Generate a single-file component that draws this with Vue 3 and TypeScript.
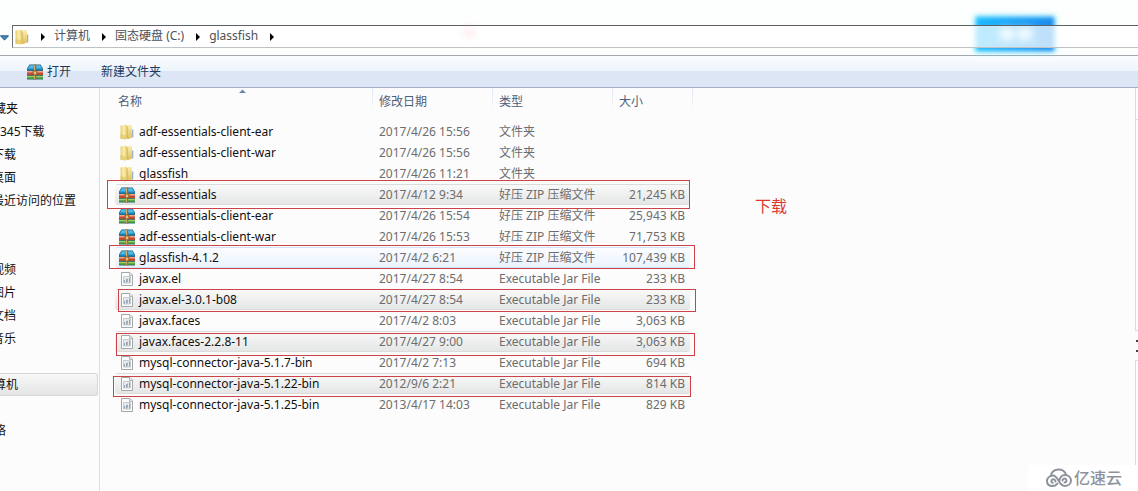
<script setup lang="ts">
type Kind = 'folder' | 'zip' | 'jar'
type State = '' | 'selected' | 'hover'
interface FileRow { name: string; date: string; kind: Kind; size: string; state: State }
interface Place { label: string; level: 'root' | 'edge' | 'sub'; active?: boolean }

const typeNames: Record<Kind, string> = {
  folder: '文件夹',
  zip: '好压 ZIP 压缩文件',
  jar: 'Executable Jar File',
}

const files: FileRow[] = [
  { name: 'adf-essentials-client-ear', date: '2017/4/26 15:56', kind: 'folder', size: '', state: '' },
  { name: 'adf-essentials-client-war', date: '2017/4/26 15:56', kind: 'folder', size: '', state: '' },
  { name: 'glassfish', date: '2017/4/26 11:21', kind: 'folder', size: '', state: '' },
  { name: 'adf-essentials', date: '2017/4/12 9:34', kind: 'zip', size: '21,245 KB', state: 'selected' },
  { name: 'adf-essentials-client-ear', date: '2017/4/26 15:54', kind: 'zip', size: '25,943 KB', state: '' },
  { name: 'adf-essentials-client-war', date: '2017/4/26 15:53', kind: 'zip', size: '71,753 KB', state: '' },
  { name: 'glassfish-4.1.2', date: '2017/4/2 6:21', kind: 'zip', size: '107,439 KB', state: 'hover' },
  { name: 'javax.el', date: '2017/4/27 8:54', kind: 'jar', size: '233 KB', state: '' },
  { name: 'javax.el-3.0.1-b08', date: '2017/4/27 8:54', kind: 'jar', size: '233 KB', state: 'selected' },
  { name: 'javax.faces', date: '2017/4/2 8:03', kind: 'jar', size: '3,063 KB', state: '' },
  { name: 'javax.faces-2.2.8-11', date: '2017/4/27 9:00', kind: 'jar', size: '3,063 KB', state: 'selected' },
  { name: 'mysql-connector-java-5.1.7-bin', date: '2017/4/2 7:13', kind: 'jar', size: '694 KB', state: '' },
  { name: 'mysql-connector-java-5.1.22-bin', date: '2012/9/6 2:21', kind: 'jar', size: '814 KB', state: 'selected' },
  { name: 'mysql-connector-java-5.1.25-bin', date: '2013/4/17 14:03', kind: 'jar', size: '829 KB', state: '' },
]

const groups: Place[][] = [
  [
    { label: '藏夹', level: 'root' },
    { label: '345下载', level: 'edge' },
    { label: '下载', level: 'sub' },
    { label: '桌面', level: 'sub' },
    { label: '最近访问的位置', level: 'sub' },
  ],
  [
    { label: '视频', level: 'sub' },
    { label: '图片', level: 'sub' },
    { label: '文档', level: 'sub' },
    { label: '音乐', level: 'sub' },
  ],
  [{ label: '算机', level: 'root', active: true }],
  [{ label: '络', level: 'root' }],
]

const crumbs: string[] = ['计算机', '固态硬盘 (C:)', 'glassfish']

// Marker outlines drawn over the list, in list coordinates.
const marks = [
  { x: 7, y: 92, w: 583, h: 28 },
  { x: 9, y: 157, w: 586, h: 23 },
  { x: 18, y: 201, w: 578, h: 22 },
  { x: 16, y: 245, w: 579, h: 22 },
  { x: 13, y: 288, w: 578, h: 20 },
]
</script>

<template>
  <div class="window">
    <svg class="defs" aria-hidden="true">
      <defs>
        <linearGradient id="gold" x1="0" x2="1">
          <stop offset="0" stop-color="#e6cd70" />
          <stop offset="0.5" stop-color="#fbf0ae" />
          <stop offset="1" stop-color="#e0c263" />
        </linearGradient>
        <linearGradient id="flap" x1="0" x2="0" y1="0" y2="1">
          <stop offset="0" stop-color="#faeeb0" />
          <stop offset="1" stop-color="#dfbf5c" />
        </linearGradient>
        <linearGradient id="lid" x1="0" x2="0" y1="0" y2="1">
          <stop offset="0" stop-color="#2f9ed6" />
          <stop offset="0.5" stop-color="#55c8f4" />
          <stop offset="1" stop-color="#2293cc" />
        </linearGradient>
        <symbol id="folder" viewBox="0 0 16 16">
          <path d="M1.500 1.500 7 .8 8.500 2v12L6.500 15.500l-5-.8z" fill="url(#gold)" />
          <path d="M8 2.500 9 1h4v12.500L9.500 15H8z" fill="url(#flap)" />
          <path d="M8.300 2.500V14.500" stroke="#cfae4f" stroke-width=".7" />
          <path d="M13 5.500h1.300V13L13 14z" fill="#9db4c4" />
          <path d="M1.500 10 7 11.500v4l-5.500-.8z" fill="#d9bb52" opacity=".5" />
        </symbol>
        <symbol id="zip" viewBox="0 0 16 16">
          <path d="M2.500.500h11L16 4.500v11H0v-11z" fill="#2a6176" />
          <path d="M3 1h10l2.500 4H.5z" fill="url(#lid)" />
          <path d="M.5 5h15v1.500H.5z" fill="#1f80b4" />
          <path d="M0 7h16v2H0z" fill="#f3a58a" />
          <path d="M0 8.500h16V11H0z" fill="#c4492f" />
          <path d="M0 11.800h16v2H0z" fill="#9bd35a" />
          <path d="M0 13.500h16V15H0z" fill="#3f9440" />
          <path d="M6.800.500h2.400v15H6.800z" fill="#9c6c33" />
          <path d="M7.500 1v14" stroke="#e3bd78" stroke-width=".8" />
          <path d="M6 6.800h4v4.200H6z" fill="#c98f45" stroke="#7a532a" stroke-width=".7" />
          <path d="M7.400 7.800h1.200V10H7.400z" fill="#fae3a0" />
        </symbol>
        <symbol id="jar" viewBox="0 0 16 16">
          <path d="M2.500 1.500h8.500l2.500 2.500v10.500h-11z" fill="#fbfcfc" stroke="#a3a8ab" />
          <path d="M10.500 1.500v3h3" fill="#e3e8ec" stroke="#b2b7bb" />
          <path d="M4.500 5.500h7v6.500h-7z" fill="#e8ebee" stroke="#bcc2c7" stroke-width=".8" />
          <path d="M5.500 11.500V9M7.500 11.500V8M10.500 11.500V6.500" stroke="#93a3b0" />
          <path d="M8.500 11.500V7.500" stroke="#cfa9a9" />
        </symbol>
      </defs>
    </svg>

    <header class="titlebar">
      <button class="history" aria-label="history">
        <svg viewBox="0 0 10 6"><path d="M.5.500h9L5.500 5h-1z" fill="#3b8cc4" stroke="#28557b" /></svg>
      </button>
      <nav class="address">
        <svg class="icon"><use href="#folder" /></svg>
        <template v-for="crumb in crumbs" :key="crumb">
          <svg class="arrow" viewBox="0 0 4 8"><path d="M0 0l4 4-4 4z" /></svg>
          <a href="#">{{ crumb }}</a>
        </template>
        <svg class="arrow" viewBox="0 0 4 8"><path d="M0 0l4 4-4 4z" /></svg>
      </nav>
      <span class="smudge"></span>
      <span class="glow"><i></i><i></i></span>
    </header>

    <div class="toolbar">
      <button class="tool"><svg class="icon"><use href="#zip" /></svg>打开</button>
      <button class="tool">新建文件夹</button>
    </div>

    <div class="body">
      <nav class="sidebar">
        <ul v-for="(group, i) in groups" :key="i">
          <li v-for="place in group" :key="place.label" :class="{ active: place.active }">
            <a href="#" :class="place.level">{{ place.label }}</a>
          </li>
        </ul>
      </nav>

      <main class="list">
        <table>
          <colgroup>
            <col class="c-name" /><col class="c-date" /><col class="c-type" /><col class="c-size" />
          </colgroup>
          <thead>
            <tr>
              <th class="sorted">名称<svg viewBox="0 0 7 4"><path d="M0 4 3.500.500 7 4z" fill="#6b87a6" /></svg></th>
              <th>修改日期</th>
              <th>类型</th>
              <th>大小</th>
            </tr>
          </thead>
          <tbody>
            <tr v-for="(file, i) in files" :key="i" :class="file.state">
              <td class="name"><span><svg class="icon"><use :href="'#' + file.kind" /></svg>{{ file.name }}</span></td>
              <td>{{ file.date }}</td>
              <td>{{ typeNames[file.kind] }}</td>
              <td class="size">{{ file.size }}</td>
            </tr>
          </tbody>
        </table>
        <svg class="marks" aria-hidden="true">
          <rect v-for="m in marks" :key="m.y" :x="m.x + 0.5" :y="m.y + 0.5" :width="m.w - 1" :height="m.h" />
        </svg>
        <span class="note">下载</span>
      </main>

      <aside class="preview">
        <div class="pane first"></div>
        <div class="dots"><i></i><i></i></div>
        <div class="pane"></div>
      </aside>
    </div>

    <div class="brand">
      <svg viewBox="0 0 26 20" fill="none" stroke="#8d929d" stroke-width="2" stroke-linecap="round">
        <path d="M5 8C5 4 8.500 1.500 12.500 1.500c4 0 6.500 2 7.500 5" />
        <path d="M9.500 13.500c0-1.500-1.500-2.500-3-2s-1.700 3 .2 3.300M6.500 18C3 18 1 16 1 13s2.500-5.500 6-5.500c5.500 0 5.500 10.500 11.500 10.500 4 0 6.500-2.500 6.500-5.500s-2.500-5.500-6-5.500-5.500 3-5.500 5.500M6.500 18c2.500 0 4-1 5-2.500M16.500 12.500c0-1.500 2-2.500 3.300-1.500s.9 3.500-1.300 3.500" />
      </svg>
      <span>亿速云</span>
    </div>
  </div>
</template>

<style>
body { margin: 0; overflow: hidden; }
</style>

<style scoped>
* { box-sizing: border-box; }
.window {
  position: relative;
  display: flex;
  flex-direction: column;
  height: 100vh;
  overflow: hidden;
  background: #fcfcfc;
  font: 12px/20px "Noto Sans", "Noto Sans CJK SC", sans-serif;
  color: #111;
}
.defs { position: absolute; width: 0; height: 0; }
.icon { width: 16px; height: 16px; flex: none; }
a { color: inherit; text-decoration: none; }
button { border: 0; padding: 0; background: none; font: inherit; color: inherit; }

.titlebar {
  position: relative;
  display: flex;
  flex: none;
  height: 55px;
  padding-top: 25px;
  background: #fdfefe;
}
.history { width: 12px; height: 23px; display: flex; align-items: center; }
.history svg { width: 9px; height: 6px; margin-top: 2px; }
.address {
  position: relative;
  z-index: 1;
  flex: 1;
  display: flex;
  align-items: center;
  height: 23px;
  padding-left: 1px;
  border: 1px solid #c0c3c5;
  border-top-color: #5e6265;
  border-left-color: #6f7376;
  border-right: 0;
  background: rgba(255, 255, 255, .72);
  color: #4c5258;
}
.address a { line-height: 19px; padding-bottom: 2px; }
.arrow { width: 4px; height: 8px; margin: 0 9px 0 12px; flex: none; fill: #000; }
.icon + .arrow { margin-left: 11px; }
.smudge {
  position: absolute;
  left: 463px;
  top: 28px;
  width: 12px;
  height: 10px;
  background: #ffc9d2;
  filter: blur(3px);
}
.glow {
  position: absolute;
  left: 976px;
  top: 17px;
  width: 78px;
  height: 34px;
  background: linear-gradient(90deg, #1ebcff, #1c8aee);
  box-shadow: 0 0 4px 1px #5fe6ff;
  filter: blur(2px);
}
.glow i { position: absolute; left: 24px; top: 11px; width: 14px; height: 12px; background: #d8f8ff; filter: blur(3px); }
.glow i + i { left: 42px; }

.toolbar {
  display: flex;
  flex: none;
  align-items: center;
  gap: 30px;
  height: 33px;
  padding-left: 27px;
  border-top: 1px solid #a3a8af;
  border-bottom: 1px solid #a0afc3;
  background: linear-gradient(#fbfdff, #edf4fb 48%, #dde6f4 50%, #dce6f4);
  color: #1e395b;
}
.tool { display: flex; align-items: center; gap: 4px; }

.body { display: flex; flex: 1; min-height: 0; }
.sidebar {
  flex: none;
  width: 100px;
  padding-top: 9px;
  border-right: 1px solid #d6e0ef;
  overflow: hidden;
}
ul { list-style: none; margin: 0 0 46px; padding: 0; }
ul:nth-child(n + 2) { margin-bottom: 23px; }
li { height: 23px; margin-right: 1px; border: 1px solid transparent; border-left: 0; line-height: 21px; white-space: nowrap; }
li.active { border-color: #d5d8da; border-radius: 0 3px 3px 0; background: linear-gradient(#f8f8f8, #e5e5e5); }
li a { display: block; }
.root { margin-left: -6px; }
.sub { margin-left: -8px; }

.list { position: relative; flex: 1; min-width: 0; }
table { width: 593px; table-layout: fixed; border-collapse: separate; border-spacing: 0; }
.c-name { width: 273px; }
.c-date, .c-type { width: 120px; }
.c-size { width: 80px; }
th {
  position: relative;
  height: 33px;
  padding: 4px 6px 0;
  text-align: left;
  vertical-align: top;
  font-weight: 400;
  color: #4c607a;
  background: linear-gradient(#dfe8f3, #e8eef6 12px, #fcfcfc 22px) right top / 1px 22px no-repeat;
}
th:first-child { padding-left: 18px; }
.sorted svg { position: absolute; left: 139px; top: 1px; width: 7px; height: 4px; }
td { height: 21px; padding: 0 6px; line-height: 19px; color: #6d6d6d; white-space: nowrap; border: 1px solid transparent; border-width: 1px 0; }
td.name { padding-left: 15px; color: #111; }
td.name span { display: flex; align-items: center; gap: 4px; height: 19px; padding-left: 4px; }
td.size { text-align: right; padding-right: 8px; }
.selected td { background: linear-gradient(#f9f9f9, #e5e6e6); border-color: #dcdcdc; }
.hover td { background: linear-gradient(#fbfdff, #ebf3fd); border-color: #d1e3f8; }
.selected td.name, .hover td.name { clip-path: inset(0 0 0 15px round 3px 0 0 3px); }
.selected td.size, .hover td.size { clip-path: inset(0 3px 0 0 round 0 3px 3px 0); }
.marks { position: absolute; left: 0; top: 0; width: 100%; height: 100%; fill: none; stroke: #cc4249; pointer-events: none; }
.note { position: absolute; left: 655px; top: 106px; font-size: 16px; line-height: 24px; color: #dc3a2f; }

.preview { flex: none; width: 3px; display: flex; flex-direction: column; }
.pane { flex: 1; border: 1px solid #d3dceb; border-right: 0; background: #fff; }
.pane.first { flex: none; height: 243px; border-top: 0; background: linear-gradient(#d3dceb, #d3dceb) left 31px / 3px 1px no-repeat #fff; }
.dots { height: 29px; display: flex; flex-direction: column; align-items: flex-end; justify-content: center; gap: 8px; }
.dots i { width: 2px; height: 2px; background: #444; }

.brand {
  position: absolute;
  right: 0;
  bottom: 0;
  display: flex;
  align-items: center;
  gap: 2px;
  height: 26px;
  padding: 0 16px 0 18px;
  background: #fff;
  font-size: 16px;
  font-weight: 500;
  color: #8d929d;
}
.brand svg { width: 26px; height: 20px; }
</style>
